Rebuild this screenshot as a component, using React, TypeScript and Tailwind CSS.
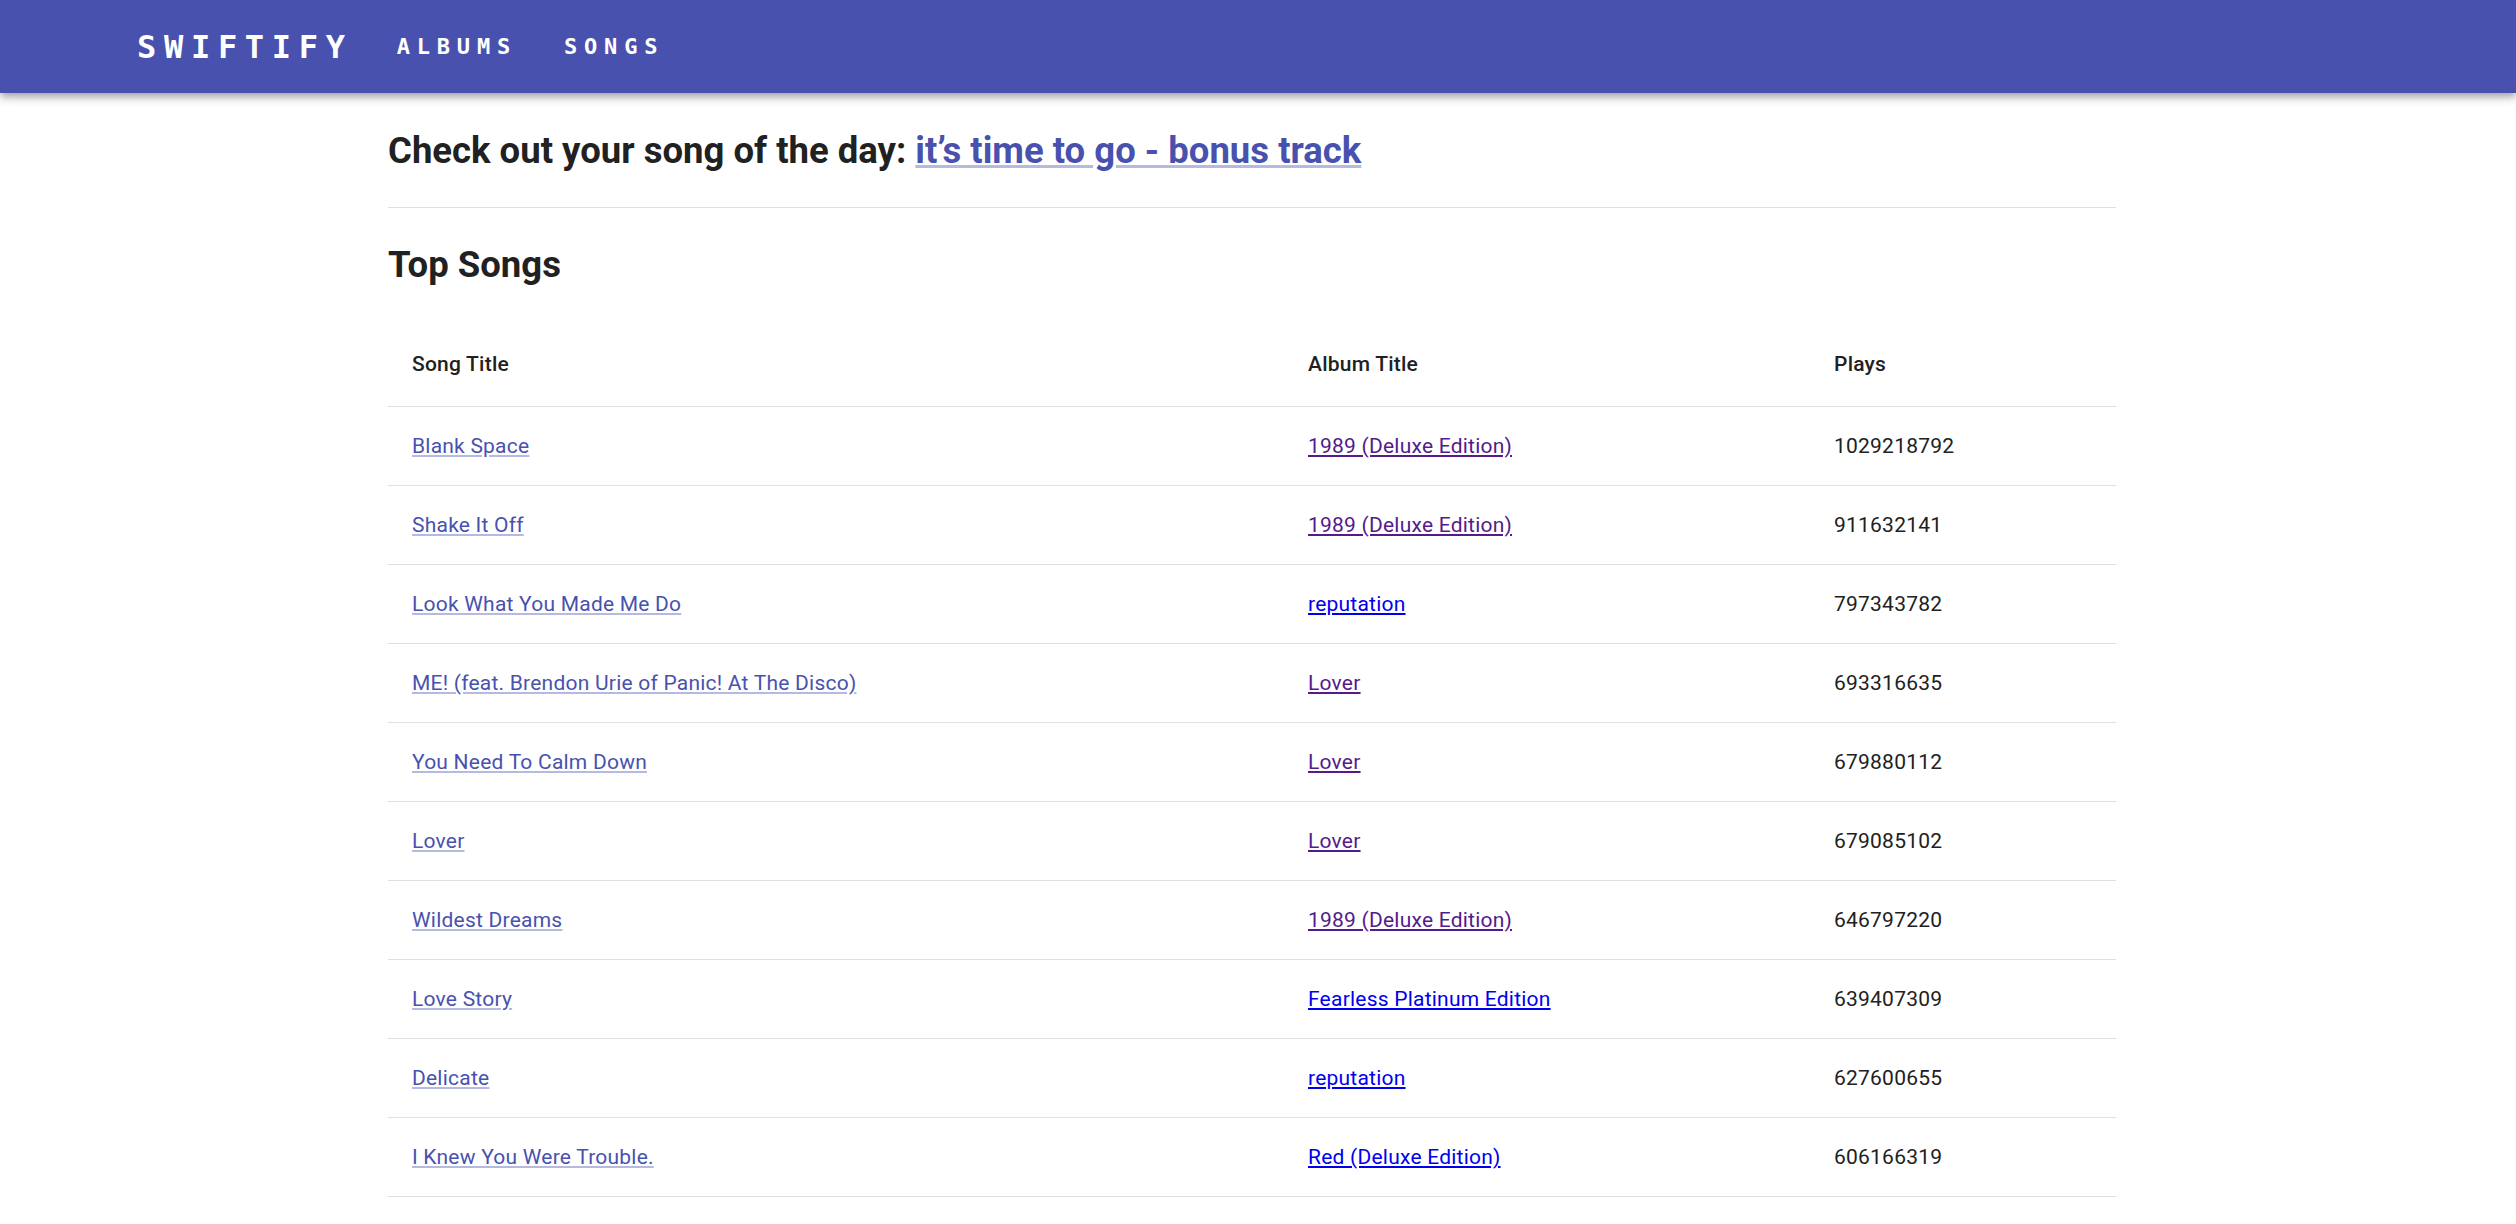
import React from 'react'

type Song = {
  title: string
  album: string
  visited: boolean
  plays: string
}

const songs: Song[] = [
  { title: 'Blank Space', album: '1989 (Deluxe Edition)', visited: true, plays: '1029218792' },
  { title: 'Shake It Off', album: '1989 (Deluxe Edition)', visited: true, plays: '911632141' },
  { title: 'Look What You Made Me Do', album: 'reputation', visited: false, plays: '797343782' },
  { title: 'ME! (feat. Brendon Urie of Panic! At The Disco)', album: 'Lover', visited: true, plays: '693316635' },
  { title: 'You Need To Calm Down', album: 'Lover', visited: true, plays: '679880112' },
  { title: 'Lover', album: 'Lover', visited: true, plays: '679085102' },
  { title: 'Wildest Dreams', album: '1989 (Deluxe Edition)', visited: true, plays: '646797220' },
  { title: 'Love Story', album: 'Fearless Platinum Edition', visited: false, plays: '639407309' },
  { title: 'Delicate', album: 'reputation', visited: false, plays: '627600655' },
  { title: 'I Knew You Were Trouble.', album: 'Red (Deluxe Edition)', visited: false, plays: '606166319' },
]

const Header = () => {
  return (
    <div className="relative z-10 h-[93px] bg-[#4852ae] text-white flex items-center shadow-[0px_3px_6px_-1.5px_rgba(0,0,0,0.2),0px_6px_7.5px_0px_rgba(0,0,0,0.14),0px_1.5px_15px_0px_rgba(0,0,0,0.12)]">
      <div className="ml-[137px] flex items-center font-['DejaVu_Sans_Mono',monospace] font-bold">
        <a className="text-[32px] tracking-[7.7px] leading-none">SWIFTIFY</a>
        <a className="ml-[44px] text-[22px] tracking-[6.8px] leading-none">ALBUMS</a>
        <a className="ml-[47px] text-[22px] tracking-[6.8px] leading-none">SONGS</a>
      </div>
    </div>
  )
}

const App = () => {
  return (
    <div className="min-h-[1224px] bg-white font-['Roboto',sans-serif] text-[#212121]">
      <Header />
      <div className="ml-[388px] w-[1728px]">
        <h2 className="mt-[34px] text-[36.5px] leading-[48px] font-bold">
          Check out your song of the day:{' '}
          <a className="text-[#4852ae] underline decoration-[rgba(72,82,174,0.4)] cursor-pointer">
            it’s time to go - bonus track
          </a>
        </h2>
        <hr className="mt-[32px] border-0 border-t border-[#e0e0e0]" />
        <h2 className="mt-[33px] text-[36.5px] leading-[48px] font-bold">Top Songs</h2>
        <table className="mt-[33px] w-full table-fixed border-collapse text-[21px] leading-[30px] tracking-[0.01071em]">
          <colgroup>
            <col className="w-[896px]" />
            <col className="w-[526px]" />
            <col className="w-[306px]" />
          </colgroup>
          <thead>
            <tr className="border-b border-[#e0e0e0]">
              <th className="p-[24px] text-left font-medium leading-[36px]">Song Title</th>
              <th className="p-[24px] text-left font-medium leading-[36px]">Album Title</th>
              <th className="p-[24px] text-left font-medium leading-[36px]">Plays</th>
            </tr>
          </thead>
          <tbody>
            {songs.map((song) => (
              <tr key={song.title} className="border-b border-[#e0e0e0]">
                <td className="p-[24px]">
                  <a className="text-[#4852ae] underline decoration-[rgba(72,82,174,0.4)] cursor-pointer">
                    {song.title}
                  </a>
                </td>
                <td className="p-[24px]">
                  <a className={song.visited ? 'text-[#551a8b] underline cursor-pointer' : 'text-[#0000ee] underline cursor-pointer'}>
                    {song.album}
                  </a>
                </td>
                <td className="p-[24px]">{song.plays}</td>
              </tr>
            ))}
          </tbody>
        </table>
      </div>
    </div>
  )
}

export default App
